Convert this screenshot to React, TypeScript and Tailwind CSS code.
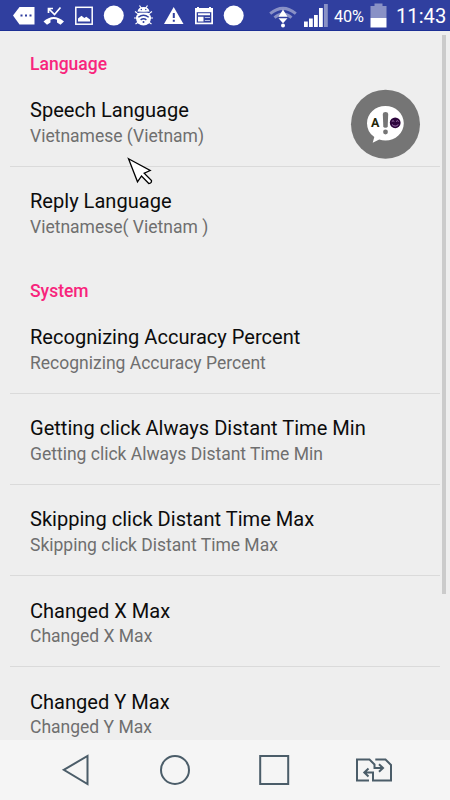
import type { ReactNode } from "react";

interface PreferenceProps {
  title: string;
  summary: string;
  divider?: boolean;
}

interface CategoryProps {
  title: string;
  children: ReactNode;
}

function Preference({ title, summary, divider = true }: PreferenceProps) {
  return (
    <div
      className={`h-[91.2px] pl-5 pt-[21.4px] border-b whitespace-nowrap ${
        divider ? "border-[#dadada]" : "border-transparent"
      }`}
    >
      <div className="text-[20.07px] leading-[27px] text-[#0c0c0c]">{title}</div>
      <div className="mt-[0.6px] text-[17.5px] leading-[23px] text-[#6f6f6f]">{summary}</div>
    </div>
  );
}

function Category({ title, children }: CategoryProps) {
  return (
    <section>
      <h2 className="h-[44.6px] pl-5 pt-[22px] text-[17.5px] leading-[23px] font-medium text-[#f8247c]">
        {title}
      </h2>
      {children}
    </section>
  );
}

function StatusBar() {
  return (
    <header className="h-[31px] shrink-0 flex items-start bg-[#303f9f] border-b border-[#1c2f94] text-white">
      <svg width="250" height="30" viewBox="0 0 250 30" fill="#fff">
        {/* keyboard tag */}
        <path d="M13 15.5 19.5 7H34.5V24.5H19.5Z" />
        <path d="M20.5 14.5h2v2h-2zM25 14.5h2v2h-2zM29.5 14.5h2v2h-2z" fill="#303f9f" />
        {/* missed call */}
        <path
          d="M48.5 13V8.5H53M49 9l5.5 5.5 6-7"
          fill="none"
          stroke="#fff"
          strokeWidth="1.7"
        />
        <path d="M43.5 21.5Q53.5 12.5 64 21.5L60.5 24.8 57 22.6V19.7Q53.8 18.5 50.5 19.7V22.6L47 24.8Z" />
        {/* picture */}
        <rect x="75.8" y="7.3" width="16.4" height="16.9" fill="none" stroke="#fff" strokeWidth="1.5" />
        <path d="M78 21.5V18.5L81.5 15.8 84.3 18 86.3 16.8 90 19.5V21.5Z" />
        <circle cx="113.8" cy="15.6" r="10" />
        {/* debugging bug */}
        <path
          d="M139.5 5.5l2 3M147.5 5.5l-2 3M135 11.5l3.5 2.5M152 11.5l-3.5 2.5M134 18h4M153 18h-4M135.5 24l3-2M151.5 24l-3-2"
          fill="none"
          stroke="#fff"
          strokeWidth="1.2"
        />
        <path d="M137.5 11.8Q138 7 143.5 7T149.5 11.8Z" />
        <ellipse cx="143.5" cy="18.3" rx="7.5" ry="7.2" />
        <path d="M137 12.3H150" stroke="#303f9f" strokeWidth=".8" />
        <path
          d="M138.3 17.2Q143.5 13.3 148.7 17.2M140.6 19.9Q143.5 17.7 146.4 19.9"
          fill="none"
          stroke="#303f9f"
          strokeWidth="1.4"
        />
        <circle cx="143.5" cy="21.9" r="1" fill="#303f9f" />
        <circle cx="141.3" cy="9.5" r=".7" fill="#303f9f" />
        <circle cx="145.8" cy="9.5" r=".7" fill="#303f9f" />
        {/* warning */}
        <path d="M173.7 7 183.5 24H164Z" />
        <path d="M172.8 13h2v5h-2zM172.8 19.8h2v2h-2z" fill="#303f9f" />
        {/* news */}
        <path d="M195 8h2V7h2v1h10V7h2v1h2v16.3h-18z" />
        <path d="M196.7 12.2h14.6v10.4h-14.6z" fill="#303f9f" />
        <path d="M198 13.3h12v2h-12zM198 16.7h5.5v4.8h-5.5z" />
        <path d="M204.8 16.9h5.2v1.2h-5.2zM204.8 19.9h5.2v1.2h-5.2z" fill="#b8bfe0" />
        <circle cx="233.7" cy="15.6" r="10" />
      </svg>
      <svg width="80" height="30" viewBox="250 0 80 30" fill="#fff">
        <g fill="none" stroke="#8991c6" strokeWidth="3">
          <path d="M270.2 13.6Q283 3.2 295.8 13.6" />
          <path d="M274.5 17.6Q283 10.5 291.5 17.6" />
        </g>
        <path d="M278.5 16.8 283 9.5 287.5 16.8ZM278.5 18.3H287.5L283 23.3Z" />
        <circle cx="283" cy="25.5" r="2" />
        <path d="M304 21.5h3.8V27H304zM309 18.5h3.8V27H309zM314 15h3.8v12H314zM319 8h3.8v19H319z" />
        <path d="M324 4h3.8v23H324z" fill="#8991c6" />
      </svg>
      <span className="ml-1 w-[36px] text-[16.3px] leading-[33px] tracking-[-0.1px] whitespace-nowrap">
        40%
      </span>
      <svg width="17" height="30" viewBox="0 0 17 30">
        <path d="M.5 6h4V3.5h8V6h4v12H.5z" fill="#8991c6" />
        <path d="M.5 18h16v9.5H.5z" fill="#fff" />
      </svg>
      <span className="ml-[9px] text-[20.2px] leading-[33px] whitespace-nowrap">11:43</span>
    </header>
  );
}

function FloatingBubble() {
  return (
    <svg
      className="absolute left-[350px] top-[89px]"
      width="72"
      height="72"
      viewBox="350 89 72 72"
    >
      <circle cx="385.5" cy="124.2" r="34.5" fill="#757575" />
      <path
        d="M385.4 106.1C395.5 106.1 403.8 113.5 403.8 123.3S395.5 140.6 385.4 140.6Q382.2 140.6 379.2 139.5L372.7 142.7 374.3 137.1Q367 132.2 367 123.3C367 113.5 375.3 106.1 385.4 106.1Z"
        fill="#fff"
      />
      <path d="M382.8 114Q382.8 112 385.5 112T388.2 114L387.7 126.4Q387.6 127.8 385.5 127.8T383.3 126.4Z" fill="#757575" />
      <circle cx="385.5" cy="132" r="2.4" fill="#757575" />
      <text x="375.2" y="127.3" textAnchor="middle" fontSize="12.5" fontWeight="700" fill="#24280b">
        A
      </text>
      <circle cx="395.2" cy="122.8" r="5.4" fill="#2e063d" />
      <path
        d="M391.8 121.5q1.3-1.6 2.5 0M396.1 121.5q1.3-1.6 2.5 0M392 124.5q3.2 3.2 6.4 0"
        fill="none"
        stroke="#b88fc7"
        strokeWidth=".8"
      />
    </svg>
  );
}

function Pointer() {
  return (
    <svg
      className="absolute left-[126px] top-[156px]"
      width="28"
      height="30"
      viewBox="126 156 28 30"
    >
      <path
        d="M128.5 158.7 150.2 170.5 144.2 173.2 151.5 180.5Q151.8 183.2 148.8 183.5L141.5 176 137.5 181.8Z"
        fill="#fff"
        stroke="#000"
        strokeWidth="1.3"
      />
    </svg>
  );
}

function NavigationBar() {
  return (
    <nav className="h-[60px] shrink-0 flex items-center bg-[#f5f5f5] pl-[60px]">
      <svg
        width="360"
        height="60"
        viewBox="60 740 360 60"
        fill="none"
        stroke="#4b5d69"
        strokeWidth="2"
      >
        <path d="M63.8 769.8 87.5 756V784Z" />
        <circle cx="175" cy="770" r="14" />
        <rect x="260.2" y="756" width="28" height="28" />
        <path d="M369 780.5H357V759.5H369.5L374.5 764.5V768H382.5M379 764.3 383 768 379 771.7" />
        <path d="M375.3 759.5H385.5L391 765V780.5H373V772.5H365M368.5 768.5 364.3 772.5 368.5 776.5" />
      </svg>
    </nav>
  );
}

export default function App() {
  return (
    <div className="relative w-[450px] h-[800px] flex flex-col overflow-hidden bg-[#eee] font-[Roboto,sans-serif]">
      <StatusBar />
      <main className="flex-1 min-h-0 flex overflow-hidden">
        <div className="w-[430px] ml-2.5">
          <Category title="Language">
            <Preference title="Speech Language" summary="Vietnamese (Vietnam)" />
            <Preference title="Reply Language" summary="Vietnamese( Vietnam )" divider={false} />
          </Category>
          <Category title="System">
            <Preference title="Recognizing Accuracy Percent" summary="Recognizing Accuracy Percent" />
            <Preference
              title="Getting click Always Distant Time Min"
              summary="Getting click Always Distant Time Min"
            />
            <Preference title="Skipping click Distant Time Max" summary="Skipping click Distant Time Max" />
            <Preference title="Changed X Max" summary="Changed X Max" />
            <Preference title="Changed Y Max" summary="Changed Y Max" />
          </Category>
        </div>
        <div className="w-1 h-[559px] ml-[1.5px] mt-[4px] bg-[#cbcbcb]" />
      </main>
      <NavigationBar />
      <FloatingBubble />
      <Pointer />
    </div>
  );
}
